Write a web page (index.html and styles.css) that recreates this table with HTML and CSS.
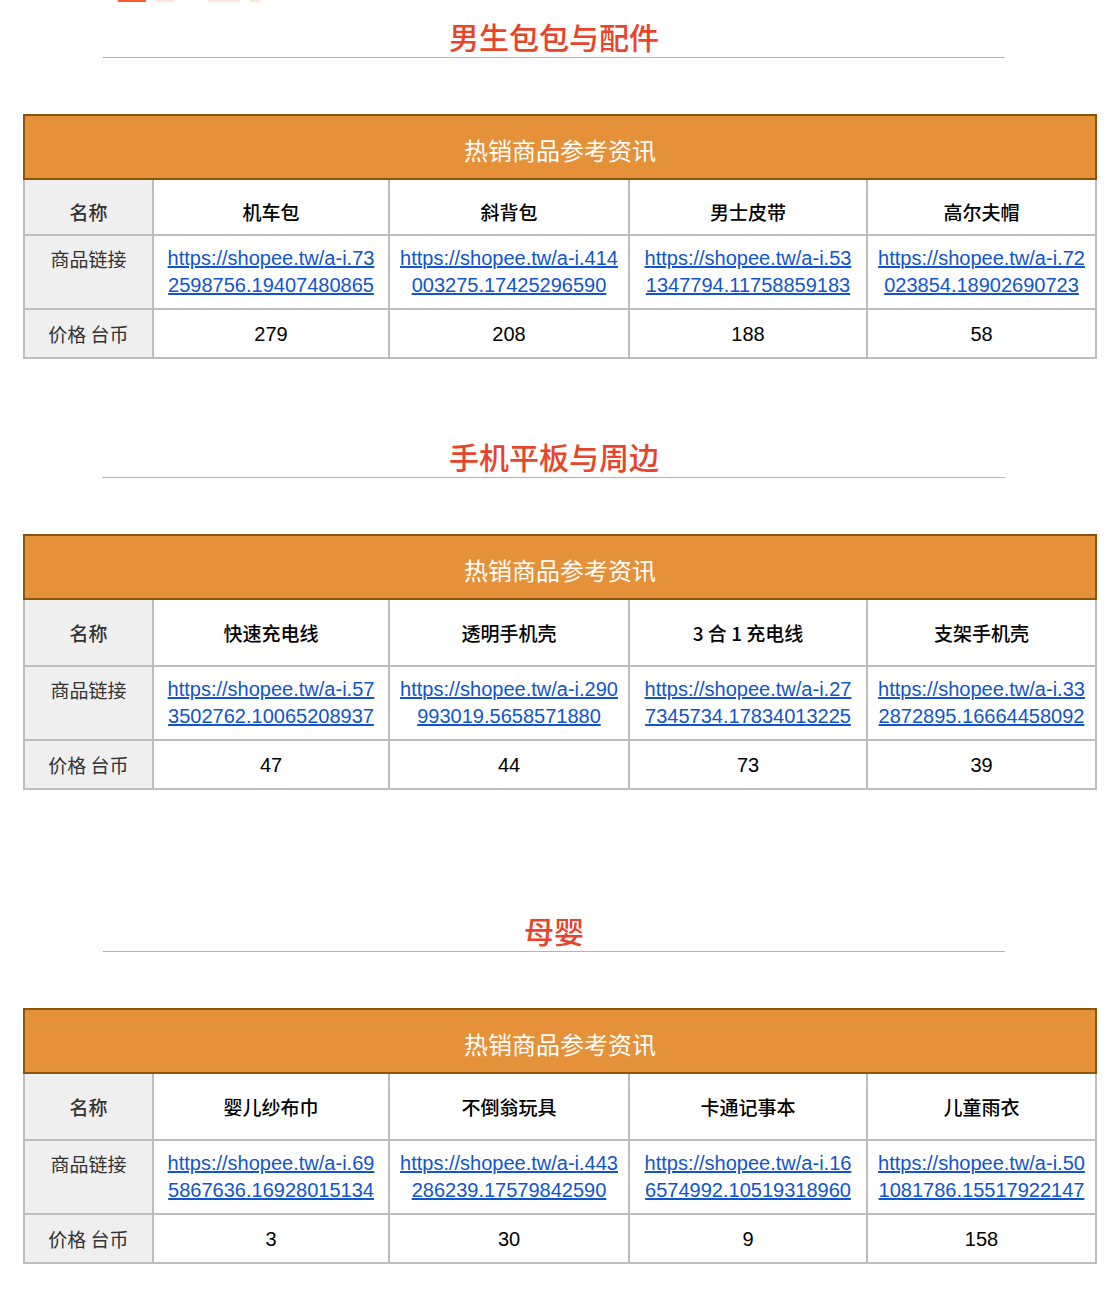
FILE: index.html
```html
<!DOCTYPE html>
<html lang="zh">
<head>
<meta charset="utf-8">
<title>热销商品参考资讯</title>
<link rel="stylesheet" href="styles.css">
</head>
<body>
<div class="remnant"><span class="r-bar"></span><span class="r-fade r1"></span><span class="r-fade r2"></span><span class="r-fade r3"></span></div>

<section class="section s1">
  <h2 class="section-title">男生包包与配件</h2>
  <table class="goods t1">
    <colgroup><col class="c0"><col class="c1"><col class="c2"><col class="c3"><col class="c4"></colgroup>
    <tr class="head"><th colspan="5">热销商品参考资讯</th></tr>
    <tr class="names"><td class="label">名称</td><td>机车包</td><td>斜背包</td><td>男士皮带</td><td>高尔夫帽</td></tr>
    <tr class="links"><td class="label">商品链接</td>
      <td><a href="#">https://shopee.tw/a-i.732598756.19407480865</a></td>
      <td><a href="#">https://shopee.tw/a-i.414003275.17425296590</a></td>
      <td><a href="#">https://shopee.tw/a-i.531347794.11758859183</a></td>
      <td><a href="#">https://shopee.tw/a-i.72023854.18902690723</a></td></tr>
    <tr class="prices"><td class="label">价格 台币</td><td>279</td><td>208</td><td>188</td><td>58</td></tr>
  </table>
</section>

<section class="section s2">
  <h2 class="section-title">手机平板与周边</h2>
  <table class="goods">
    <colgroup><col class="c0"><col class="c1"><col class="c2"><col class="c3"><col class="c4"></colgroup>
    <tr class="head"><th colspan="5">热销商品参考资讯</th></tr>
    <tr class="names"><td class="label">名称</td><td>快速充电线</td><td>透明手机壳</td><td>3 合 1 充电线</td><td>支架手机壳</td></tr>
    <tr class="links"><td class="label">商品链接</td>
      <td><a href="#">https://shopee.tw/a-i.573502762.10065208937</a></td>
      <td><a href="#">https://shopee.tw/a-i.290993019.5658571880</a></td>
      <td><a href="#">https://shopee.tw/a-i.277345734.17834013225</a></td>
      <td><a href="#">https://shopee.tw/a-i.332872895.16664458092</a></td></tr>
    <tr class="prices"><td class="label">价格 台币</td><td>47</td><td>44</td><td>73</td><td>39</td></tr>
  </table>
</section>

<section class="section s3">
  <h2 class="section-title">母婴</h2>
  <table class="goods">
    <colgroup><col class="c0"><col class="c1"><col class="c2"><col class="c3"><col class="c4"></colgroup>
    <tr class="head"><th colspan="5">热销商品参考资讯</th></tr>
    <tr class="names"><td class="label">名称</td><td>婴儿纱布巾</td><td>不倒翁玩具</td><td>卡通记事本</td><td>儿童雨衣</td></tr>
    <tr class="links"><td class="label">商品链接</td>
      <td><a href="#">https://shopee.tw/a-i.695867636.16928015134</a></td>
      <td><a href="#">https://shopee.tw/a-i.443286239.17579842590</a></td>
      <td><a href="#">https://shopee.tw/a-i.166574992.10519318960</a></td>
      <td><a href="#">https://shopee.tw/a-i.501081786.15517922147</a></td></tr>
    <tr class="prices"><td class="label">价格 台币</td><td>3</td><td>30</td><td>9</td><td>158</td></tr>
  </table>
</section>
</body>
</html>
```

FILE: styles.css
```css
html, body {
  margin: 0;
  padding: 0;
  background: #ffffff;
}
body {
  font-family: "Liberation Sans", "Noto Sans CJK SC", sans-serif;
  color: #000;
  width: 1117px;
}
.remnant {
  display: flex;
  height: 2px;
  padding-left: 118px;
}
.r-bar { width: 28px; height: 2px; background: #ff5a2c; }
.r-fade { height: 2px; background: #fde3d8; }
.r1 { width: 20px; margin-left: 9px; }
.r2 { width: 32px; margin-left: 33px; }
.r3 { width: 10px; margin-left: 10px; }

.section { padding-left: 23px; }
.s1 { padding-top: 15px; }
.s2 { padding-top: 78px; }
.s3 { padding-top: 121px; }

.section-title {
  position: relative;
  margin: 0 0 56px 80px;
  width: 902px;
  padding-bottom: 3px;
  text-align: center;
  font-family: "Noto Sans CJK SC", sans-serif;
  font-weight: 500;
  font-size: 30px;
  line-height: 38px;
  color: #e8442c;
}
.section-title::after {
  content: "";
  position: absolute;
  left: 0;
  right: 0;
  bottom: 0;
  height: 1px;
  background: repeating-linear-gradient(90deg, #f29a18 0 1px, #f7bb66 1px 2px);
}

.goods {
  border-collapse: collapse;
  table-layout: fixed;
  width: 1072px;
}
.c0 { width: 129px; }
.c1 { width: 236px; }
.c2 { width: 240px; }
.c3 { width: 238px; }
.c4 { width: 229px; }

.goods td, .goods th {
  border: 2px solid #bdbdbd;
  text-align: center;
  padding: 0 10px;
  font-size: 20px;
}
.goods .head th {
  background: #e5913a;
  border: 2px solid #8a560e;
  color: #fff;
  font-family: "Noto Sans CJK SC", sans-serif;
  font-weight: 400;
  font-size: 24px;
  height: 57px;
  padding-top: 5px;
}
.goods .label {
  background: #efefef;
  color: #333;
  font-family: "Noto Sans CJK SC", sans-serif;
  font-size: 19px;
  padding-left: 4px;
  padding-right: 4px;
}
.names td {
  height: 65px;
  font-family: "Noto Sans CJK SC", sans-serif;
  font-weight: 500;
  font-size: 19px;
}
.t1 .names td {
  height: 46px;
  padding-top: 8px;
}
.links td {
  height: 53px;
  padding-top: 9px;
  padding-bottom: 9px;
  line-height: 27px;
  vertical-align: top;
  word-break: break-all;
}
.links a {
  color: #1155cc;
  text-decoration: underline;
}
.prices td {
  height: 47px;
  line-height: 24px;
}
```
